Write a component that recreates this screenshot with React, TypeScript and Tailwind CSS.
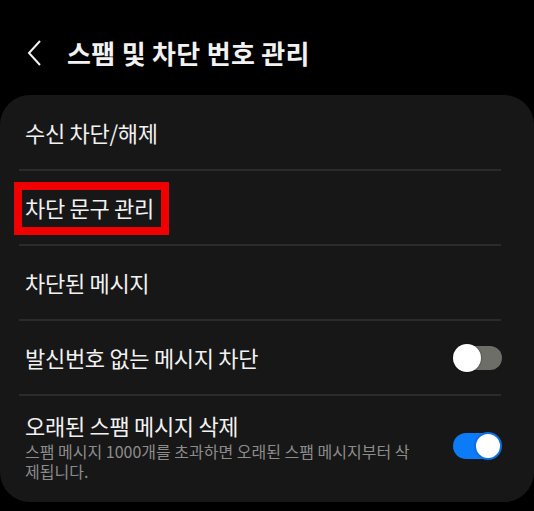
import React, { useState } from 'react';

const font = { fontFamily: '"Noto Sans CJK KR", "Noto Sans", sans-serif' };

const Toggle = ({ on, onChange }: { on: boolean; onChange: () => void }) => (
  <button onClick={onChange} className="relative w-[49px] h-[28px] shrink-0">
    {on ? (
      <>
        <span className="absolute inset-y-[1px] left-0 right-[2px] rounded-full bg-[#0b7bf7]" />
        <span className="absolute right-0 top-0 w-[28px] h-[28px] rounded-full bg-white border-[2px] border-[#0b6fe0]" />
      </>
    ) : (
      <>
        <span className="absolute inset-y-[2px] left-[6px] right-0 rounded-full bg-[#6e6e68]" />
        <span className="absolute left-0 top-0 w-[28px] h-[28px] rounded-full bg-white shadow-[0_0_2px_rgba(0,0,0,0.6)]" />
      </>
    )}
  </button>
);

const Divider = () => <div className="h-[2px] ml-[19px] mr-[33px] bg-[#2b2b2b]" />;

const Row = ({ children, right }: { children: React.ReactNode; right?: React.ReactNode }) => (
  <div className="flex items-center justify-between pl-[25px] pr-[32px] h-[73px]">
    {children}
    {right}
  </div>
);

export default function App() {
  const [noCaller, setNoCaller] = useState(false);
  const [autoDelete, setAutoDelete] = useState(true);

  return (
    <div className="w-[534px] h-[511px] bg-black text-[#f2f2f2] overflow-hidden" style={font}>
      {/* header */}
      <div className="h-[95px] flex items-center pl-[27px] pt-[11px]">
        <svg width="16" height="26" viewBox="0 0 16 26" className="shrink-0">
          <polyline points="13,1 2,13 13,25" fill="none" stroke="#f2f2f2" strokeWidth="2" />
        </svg>
        <h1 className="ml-[24px] text-[26px] font-semibold tracking-[0.3px] leading-none">스팸 및 차단 번호 관리</h1>
      </div>

      {/* settings card */}
      <div className="bg-[#171717] rounded-[30px] h-[407px] pt-[1px]">
        <Row>
          <span className="text-[22px] tracking-[-0.3px]">수신 차단/해제</span>
        </Row>
        <Divider />
        <Row>
          <span className="relative text-[22px] tracking-[-0.3px]">
            차단 문구 관리
            <span className="absolute -left-[11px] -right-[15px] -top-[9px] -bottom-[11px] border-[8px] border-[#f00000]" />
          </span>
        </Row>
        <Divider />
        <Row>
          <span className="text-[22px] tracking-[-0.3px]">차단된 메시지</span>
        </Row>
        <Divider />
        <Row right={<Toggle on={noCaller} onChange={() => setNoCaller(!noCaller)} />}>
          <span className="text-[22px] tracking-[-0.3px]">발신번호 없는 메시지 차단</span>
        </Row>
        <Divider />
        <div className="flex items-center justify-between pl-[25px] pr-[32px] pt-[14px]">
          <div>
            <div className="text-[22px] tracking-[-0.3px] leading-[30px]">오래된 스팸 메시지 삭제</div>
            <div className="text-[16px] text-[#8c8c8c] leading-[20px] mt-[1px]">
              스팸 메시지 1000개를 초과하면 오래된 스팸 메시지부터 삭<br />제됩니다.
            </div>
          </div>
          <Toggle on={autoDelete} onChange={() => setAutoDelete(!autoDelete)} />
        </div>
      </div>
    </div>
  );
}
